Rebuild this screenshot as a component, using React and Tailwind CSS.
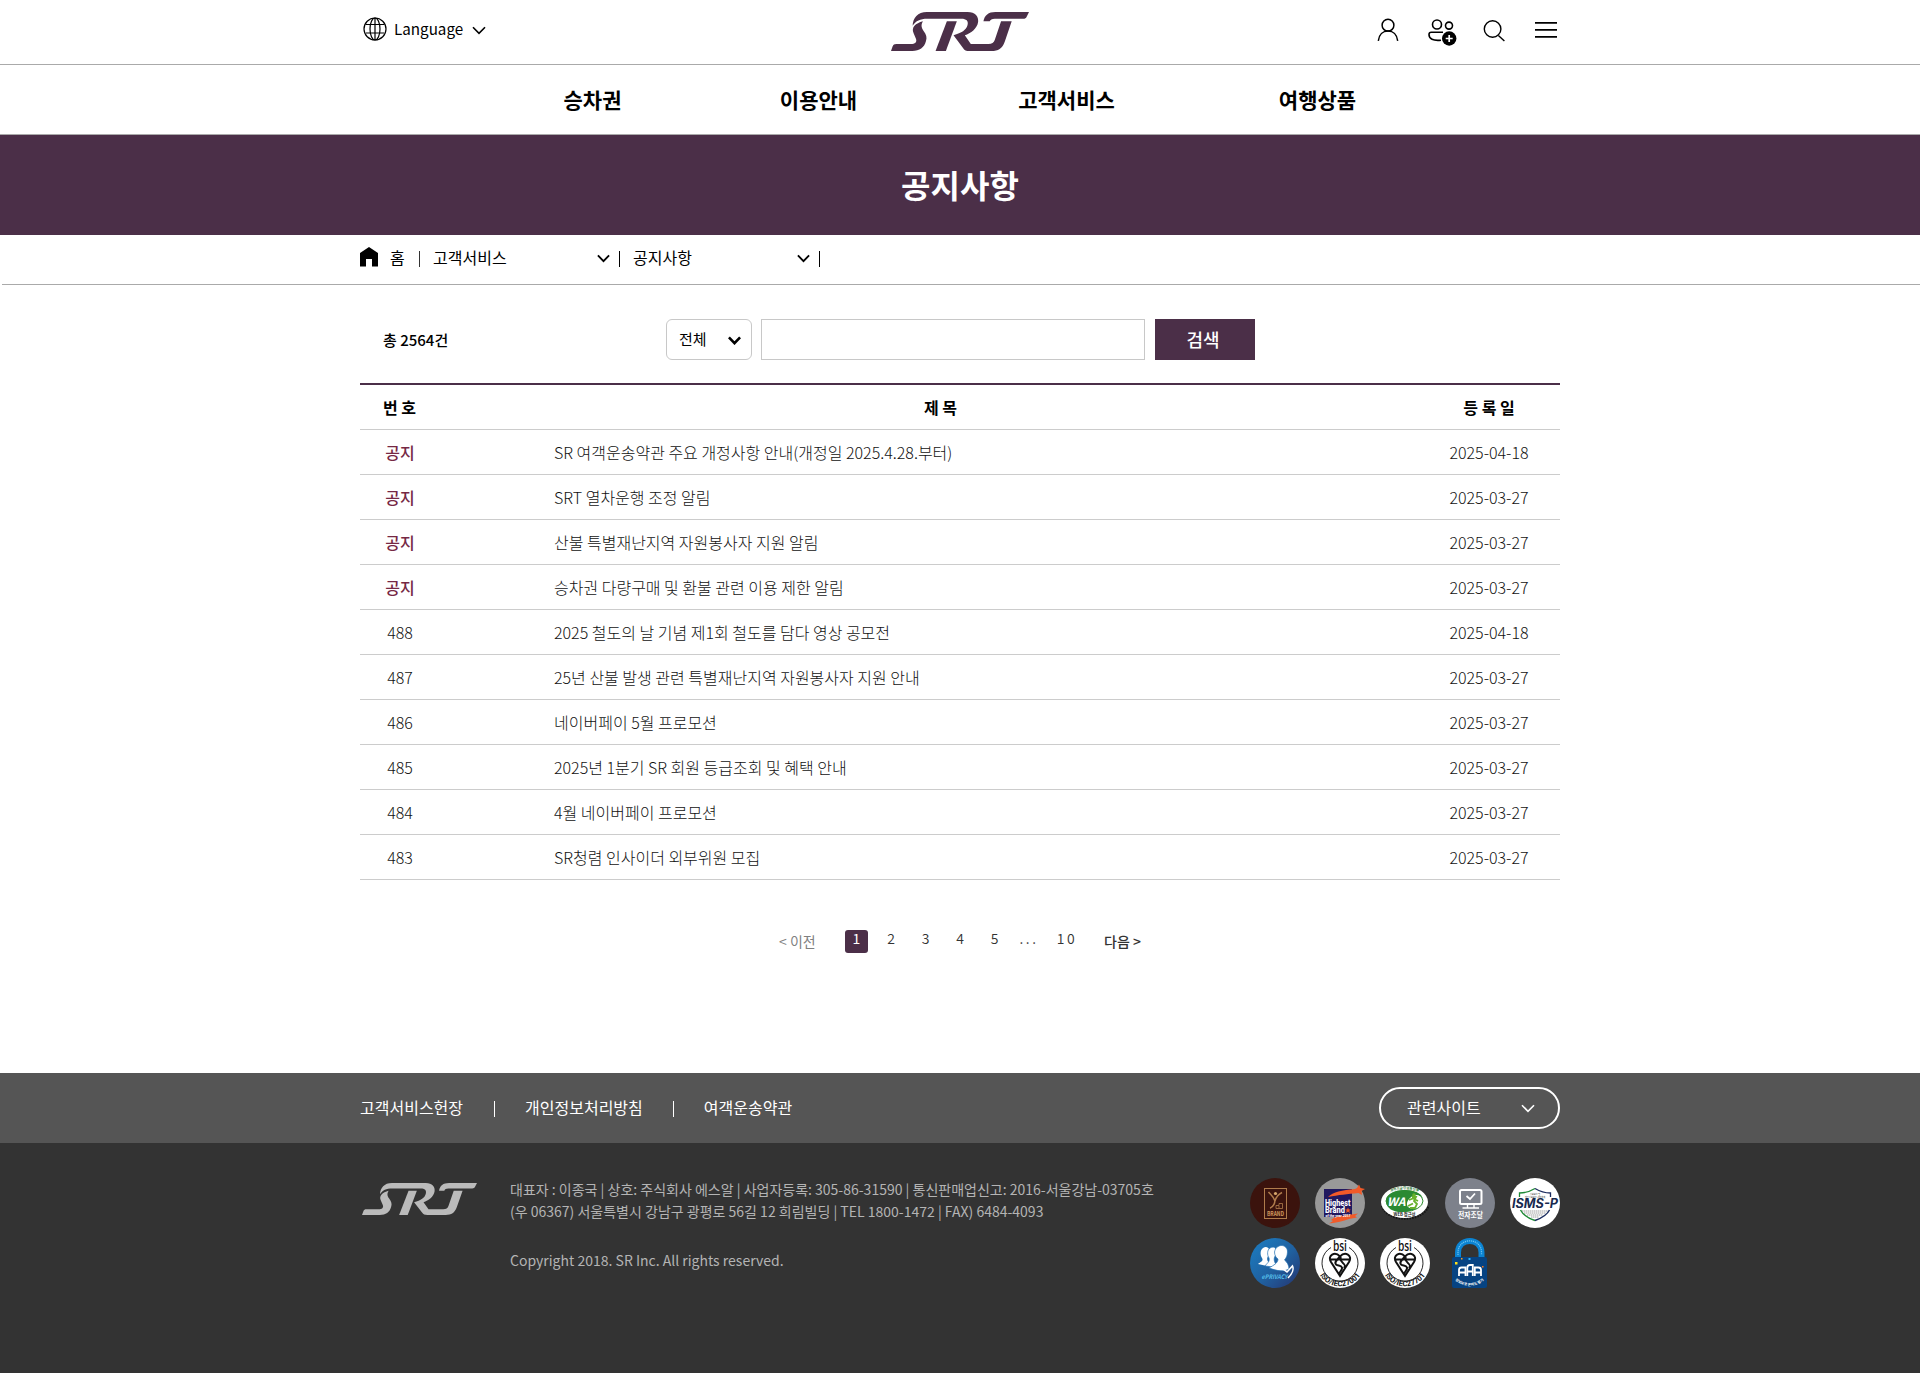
import React from "react";

const NOTICES = [
  ["공지", "SR 여객운송약관 주요 개정사항 안내(개정일 2025.4.28.부터)", "2025-04-18"],
  ["공지", "SRT 열차운행 조정 알림", "2025-03-27"],
  ["공지", "산불 특별재난지역 자원봉사자 지원 알림", "2025-03-27"],
  ["공지", "승차권 다량구매 및 환불 관련 이용 제한 알림", "2025-03-27"],
  ["488", "2025 철도의 날 기념 제1회 철도를 담다 영상 공모전", "2025-04-18"],
  ["487", "25년 산불 발생 관련 특별재난지역 자원봉사자 지원 안내", "2025-03-27"],
  ["486", "네이버페이 5월 프로모션", "2025-03-27"],
  ["485", "2025년 1분기 SR 회원 등급조회 및 혜택 안내", "2025-03-27"],
  ["484", "4월 네이버페이 프로모션", "2025-03-27"],
  ["483", "SR청렴 인사이더 외부위원 모집", "2025-03-27"],
];

function Logo({ className }) {
  return (
    <svg viewBox="32 36 415 117" preserveAspectRatio="none" fill="currentColor" className={className}>
      <path d="M97 77C98 54 112 36 140 36H262C286 36 296 50 294 66C291 86 272 100 254 106L272 132H325C336 132 341 128 344 120L363 64H395L374 125C366 146 355 153 334 153H268C258 153 253 151 248 143L220 106C245 99 258 90 262 76C266 62 258 56 244 56H142C118 56 108 62 97 77Z" />
      <path d="M200 64H230L197 153H166Z" />
      <path d="M128 64C121 76 124 84 130 93C138 104 141 112 137 124C132 143 118 153 96 153H32L37 139C39 134 42 132 48 132H92C104 132 111 126 107 116L100 100C92 82 106 70 128 64Z" />
      <path d="M310 64C313 46 325 36 346 36H447L440 50C438 54 435 56 430 56H344C335 56 331 59 329 64Z" />
    </svg>
  );
}

function Chevron({ className, width = 1.6 }) {
  return (
    <svg viewBox="0 0 14 9" fill="none" stroke="currentColor" strokeWidth={width} className={className}>
      <path d="M1 1.2 7 7.4 13 1.2" />
    </svg>
  );
}

function Globe() {
  return (
    <svg viewBox="0 0 24 24" fill="none" stroke="currentColor" strokeWidth="1.2" className="size-6">
      <circle cx="12" cy="12" r="11" />
      <ellipse cx="12" cy="12" rx="5" ry="11" />
      <path d="M12 1v22M2.6 7.5h18.8M2.6 16h18.8" />
    </svg>
  );
}

function Header() {
  return (
    <header>
      <div className="h-[65px] border-b border-[#aaa]">
        <div className="mx-auto grid h-full w-[1200px] grid-cols-[1fr_138px_1fr]">
          <div className="flex items-center pb-[7px] pl-[3px]">
            <Globe />
            <span className="mb-[2px] ml-[7px] text-[15.2px] leading-6">Language</span>
            <Chevron className="mt-1 ml-[9px] h-[9px] w-[14px]" />
          </div>
          <Logo className="mt-3 h-[39px] w-[138px] text-[#4b2f48]" />
          <div className="flex items-start justify-end pr-[3px]">
            <svg viewBox="0 0 22 24" fill="none" stroke="currentColor" strokeWidth="1.5" className="mt-[18px] mr-[29px] h-6 w-[22px]">
              <circle cx="11" cy="7.2" r="5.9" />
              <path d="M1.3 22.8C2 16.5 6 12.9 11 12.9s9 3.6 9.7 9.9" />
            </svg>
            <svg viewBox="0 0 29 28" fill="none" stroke="currentColor" strokeWidth="1.6" className="mt-[19px] mr-[26px] h-7 w-[29px]">
              <circle cx="9" cy="5.5" r="4.5" />
              <circle cx="21" cy="6.6" r="3.5" />
              <path d="M15 13.3H3.3C1.8 13.3 1 14.2 1 15.5C1 20 5 22 13 21.2" />
              <circle cx="21.2" cy="19.5" r="7.2" fill="currentColor" stroke="none" />
              <path d="M21.2 16v7M17.7 19.5h7" stroke="#fff" strokeWidth="1.7" />
            </svg>
            <svg viewBox="0 0 22 22" fill="none" stroke="currentColor" strokeWidth="1.4" className="mt-[20px] mr-[30px] size-[22px]">
              <circle cx="9.6" cy="9" r="8.3" />
              <path d="M15.4 15.5 21.4 21" />
            </svg>
            <svg viewBox="0 0 22 18" stroke="currentColor" strokeWidth="1.7" className="mt-[21px] h-[18px] w-[22px]">
              <path d="M0 1.8h22M0 8.8h22M0 15.8h22" />
            </svg>
          </div>
        </div>
      </div>
      <nav className="flex h-[70px] justify-center border-b border-[#aaa] pr-[10px] text-[21px] leading-[68px] font-bold">
        <span className="w-[200px] text-center">승차권</span>
        <span className="ml-[26px] w-[200px] text-center">이용안내</span>
        <span className="ml-[48px] w-[200px] text-center">고객서비스</span>
        <span className="ml-[51px] w-[200px] text-center">여행상품</span>
      </nav>
    </header>
  );
}

function Bar({ className }) {
  return <i className={"block w-px " + className} />;
}

function Breadcrumb() {
  return (
    <div className="ml-[2px] h-[50px] border-b border-[#aaa]">
      <div className="mx-auto flex h-full w-[1200px] -translate-x-px items-center pb-[5px] text-base">
        <svg viewBox="0 0 18 20" fill="currentColor" className="h-5 w-[18px]">
          <path d="M0 6 9 0l9 6v13.500h-6V12H6v7.500H0Z" />
        </svg>
        <span className="ml-3 w-[29px]">홈</span>
        <Bar className="mt-[3px] h-4 bg-[#333]" />
        <span className="ml-[13px] w-[164px]">고객서비스</span>
        <Chevron width={2} className="mt-[3px] h-[9px] w-[13px]" />
        <Bar className="mt-[3px] ml-[9px] h-4 bg-black" />
        <span className="ml-[13px] w-[164px]">공지사항</span>
        <Chevron width={2} className="mt-[3px] h-[9px] w-[13px]" />
        <Bar className="mt-[3px] ml-[9px] h-4 bg-black" />
      </div>
    </div>
  );
}

function SearchBar() {
  return (
    <div className="flex h-[41px]">
      <p className="w-[306px] pl-[23px] text-[15px] leading-[42px] font-medium">총 2564건</p>
      <div className="flex w-[86px] items-center justify-between rounded-[6px] border border-[#c8c8c8] pr-[10px] pl-3 text-[15px]">
        <span>전체</span>
        <Chevron width={2.8} className="mt-[2px] h-[9px] w-[13px]" />
      </div>
      <input className="ml-[9px] w-[384px] border border-[#c8c8c8] outline-none" />
      <button className="ml-[10px] w-[100px] bg-[#4b2f48] pr-1 pb-[2px] text-[18px] leading-[38px] font-medium text-white">검색</button>
    </div>
  );
}

function NoticeTable() {
  return (
    <div className="mt-[23px] border-t-2 border-[#4b2f48] text-base">
      <div className="grid h-[45px] grid-cols-[80px_1fr_142px] border-b border-[#ccc] text-center leading-[45px] font-bold">
        <span className="pr-px">번 호</span>
        <span className="pl-[23px]">제 목</span>
        <span>등 록 일</span>
      </div>
      {NOTICES.map(([no, title, date], i) => (
        <div key={i} className="grid h-[45px] grid-cols-[80px_1fr_142px] border-b border-[#ccc] leading-[45px] font-light text-[#111]">
          {no === "공지" ? (
            <span className="text-center font-medium text-[#762844]">{no}</span>
          ) : (
            <span className="text-center">{no}</span>
          )}
          <span className="pl-[114px]">{title}</span>
          <span className="text-center">{date}</span>
        </div>
      ))}
    </div>
  );
}

function Pagination() {
  return (
    <div className="mt-[50px] flex h-6 text-[14px] font-[350] text-[#333]">
      <span className="ml-[419px] w-[66px] leading-[22px] font-normal text-[#808080]">&lt; 이전</span>
      <span className="h-[23px] w-[23px] rounded-[3px] bg-[#4b2f48] text-center leading-[17px] font-normal text-white">1</span>
      <span className="ml-[6px] w-[34px] text-center leading-[17px]">2</span>
      <span className="w-[35px] text-center leading-[17px]">3</span>
      <span className="w-[34px] text-center leading-[17px]">4</span>
      <span className="w-[35px] text-center leading-[17px]">5</span>
      <span className="w-[34px] text-center leading-[17px] tracking-[2.5px]">...</span>
      <span className="ml-[3px] w-[36px] text-center leading-[17px] tracking-[2.5px]">10</span>
      <span className="ml-[19px] leading-[22px] font-medium">다음 &gt;</span>
    </div>
  );
}

function Bsi({ id, label }) {
  return (
    <svg viewBox="0 0 50 50" className="size-[50px] overflow-visible">
      <circle cx="25" cy="25" r="25" fill="#fff" />
      <path d="M16 9.500A18 18 0 1 0 34 9.500" fill="none" stroke="#111" strokeWidth=".9" />
      <text x="18" y="13" fontSize="13" fontWeight="500" fill="#111" textLength="14" lengthAdjust="spacingAndGlyphs">bsi</text>
      <path d="M16 24C12 17 20 13 25 18.500C30 13 38 17 34 24L25 38ZM14.700 21.500H35.300M25 18.500C22 22 19 24 21 26.500C23 28 26 27 27 29.500C27.500 32 25 33 24 36M26 19C23 25 33 25 29 30" fill="none" stroke="#111" strokeWidth="2" />
      <path id={id} d="M4 36A24 24 0 0 0 46 36" fill="none" />
      <text fontSize="7.6" fontWeight="700" fontFamily="Roboto, sans-serif" fill="#111" textAnchor="middle">
        <textPath href={"#" + id} startOffset="50%">{label}</textPath>
      </text>
    </svg>
  );
}

function Badges() {
  return (
    <div className="grid grid-cols-[repeat(5,50px)] gap-x-[15px] gap-y-[10px]">
      <svg viewBox="0 0 50 50" className="size-[50px]">
        <circle cx="25" cy="25" r="25" fill="#3b130d" />
        <g fill="none" stroke="#b07c4c">
          <rect x="14.5" y="10.5" width="22" height="30" />
          <path d="M18.500 14C21 17 24 19 25 23C26 19 28 16.500 32 14.500M25 21C25 26 23 29 20 30" strokeWidth="1.5" />
          <path d="M26 30.500V27.500H29V25.500H32.500V30.500ZM29 28V30" strokeWidth=".8" />
        </g>
        <circle cx="25.500" cy="15.500" r="1.6" fill="#d9a86c" />
        <text x="17" y="37.5" fontSize="5.5" fontWeight="700" fill="#d0985e" textLength="17" lengthAdjust="spacingAndGlyphs">BRAND</text>
      </svg>
      <svg viewBox="0 0 50 50" className="size-[50px] overflow-visible">
        <circle cx="25" cy="25" r="25" fill="#999" />
        <rect x="9" y="11" width="28" height="28" fill="#21185f" />
        <path d="M13 19C18 14 27 12 40 11L42 10L44 6.500L45.500 10L50 11L46.500 13L47 17L43.500 15C32 16 24 17 13 19Z" fill="#f15a29" />
        <path d="M16 42L20 39L43 35.500L40 38L42 39.500L34 41C28 43 22 44.500 14 45.500L18 43Z" fill="#f15a29" />
        <g fontWeight="800" fill="#fff" fontFamily="Roboto, sans-serif">
          <text x="10" y="27.5" fontSize="8.6" textLength="25.5" lengthAdjust="spacingAndGlyphs">Highest</text>
          <text x="10" y="35" fontSize="8.6" textLength="20" lengthAdjust="spacingAndGlyphs">Brand</text>
          <text x="10.5" y="38.6" fontSize="3.5" textLength="25" lengthAdjust="spacingAndGlyphs">of the year 2017</text>
        </g>
        <path d="M33 29.500l.8 2h2l-1.500 1.300.6 2.200-1.900-1.200-1.900 1.200.6-2.200-1.500-1.300h2Z" fill="#f15a29" />
      </svg>
      <svg viewBox="0 0 50 50" className="size-[50px]">
        <path d="M2 28C7 45 43 45 48.500 28" fill="none" stroke="#151515" strokeWidth="2" strokeDasharray="1.500 1.200" />
        <ellipse cx="24.5" cy="24" rx="23.5" ry="16" fill="#fff" />
        <ellipse cx="24.5" cy="23" rx="18.5" ry="10.5" fill="#fff" stroke="#2f8e2f" strokeWidth="1" />
        <path d="M6 23C6 9 40 9 42.500 20C38 14 29 18 27 25C26 31 34 32 39 29C28 37 6 36 6 23Z" fill="#2b8a33" />
        <text x="7" y="27.5" fontSize="11.5" fontWeight="700" fontStyle="italic" fill="#fff" textLength="18.5" lengthAdjust="spacingAndGlyphs">WA</text>
        <path d="M32 19L36 19L34 23L37 26L35 30M29 22L33 20.500L38 23M28 28L33 25.500M30 30H35" fill="none" stroke="#69b22d" strokeWidth="1.8" />
        <circle cx="34" cy="17" r="1.8" fill="#69b22d" />
        <path id="wa-top" d="M6 17C14 9.500 35 9.500 43 17" fill="none" />
        <text fontSize="3.4" fontWeight="700" fill="#2b7a33" textAnchor="middle">
          <textPath href="#wa-top" startOffset="50%">과학기술정보통신부</textPath>
        </text>
        <text x="24.5" y="38" fontSize="4.2" fontWeight="700" fill="#222" textAnchor="middle">WEB 접근성</text>
      </svg>
      <svg viewBox="0 0 50 50" className="size-[50px]">
        <circle cx="25" cy="25" r="25" fill="#7d818b" />
        <rect x="15" y="12" width="21.5" height="14" rx="1.5" fill="none" stroke="#fff" strokeWidth="2" />
        <path d="M21.500 18L25 21L30 15.500" fill="none" stroke="#fff" strokeWidth="1.8" />
        <path d="M22.500 27V30M29 27V30M17.500 30H34" fill="none" stroke="#fff" strokeWidth="1.4" />
        <text x="13" y="40.3" fontSize="7.5" fontWeight="700" fill="#fff" textLength="25" lengthAdjust="spacingAndGlyphs">전자조달</text>
      </svg>
      <svg viewBox="0 0 50 50" className="size-[50px]">
        <circle cx="25" cy="25" r="25" fill="#fff" />
        <path d="M9.500 19V15C15 15 20 13.500 25 10.500" fill="none" stroke="#1f8a36" strokeWidth="1.3" />
        <path d="M25 10.500C30 13.500 35 15 40.500 15V19" fill="none" stroke="#1a2b5e" strokeWidth="1.3" />
        <path d="M10.500 32C13 37 18 40 25 42.500" fill="none" stroke="#1f8a36" strokeWidth="1.5" />
        <path d="M25 42.500C32 40 37 37 39.500 32" fill="none" stroke="#1a2b5e" strokeWidth="1.5" />
        <text x="25" y="16.5" fontSize="2.2" fill="#333" textAnchor="middle">정보보호 및</text>
        <text x="25" y="19.5" fontSize="2.2" fill="#333" textAnchor="middle">개인정보보호 관리체계</text>
        <text x="2" y="30" fontSize="12.5" fontFamily="Inter, sans-serif" fontWeight="700" fontStyle="italic" fill="#17294f" textLength="46" lengthAdjust="spacingAndGlyphs">ISMS-P</text>
        <path d="M12 33H38M14 35H36M17 37H33M21 39H29" stroke="#888" strokeWidth=".8" strokeDasharray="1.500 .5" />
      </svg>
      <svg viewBox="0 0 50 50" className="size-[50px]">
        <defs>
          <linearGradient id="privacy-bg" x1="0" y1="0" x2="1" y2="1">
            <stop offset="0" stopColor="#1b7fc4" />
            <stop offset=".55" stopColor="#20609f" />
            <stop offset="1" stopColor="#25336f" />
          </linearGradient>
        </defs>
        <circle cx="25" cy="25" r="25" fill="url(#privacy-bg)" />
        <path d="M13 10C18 7 21 12 19 17C16 20 17 23 20 26L17 28L8 26C10 24 14 23 12 20C10 17 10 12 13 10Z" fill="#fff" />
        <path d="M20 10C25 7 28 12 26 17C23 20 24 24 27 28L23 29L15 28C17 25 20 24 19 20C17 17 17 12 20 10Z" fill="#fff" stroke="#2170b3" strokeWidth=".7" />
        <path d="M24.500 14C26 5.500 36.500 5.500 37.500 13C37.500 18 36 20 34.500 22C37 24 39 27 39 31C34 34 27 33 19 30C24 27 28 25 28 21C26 20 24.500 17 24.500 14Z" fill="#fff" stroke="#2170b3" strokeWidth=".7" />
        <path d="M33 31L37 34L42.500 28C44 31 42 36 38 40" fill="none" stroke="#fff" strokeWidth="1.6" />
        <text x="11.5" y="41" fontSize="6.2" fontWeight="700" fontStyle="italic" fill="#54bde8" textLength="26" lengthAdjust="spacingAndGlyphs">ePRIVACY</text>
      </svg>
      <Bsi id="bsi-27001" label="ISO/IEC27001" />
      <Bsi id="bsi-27701" label="ISO/IEC27701" />
      <svg viewBox="0 0 50 50" className="size-[50px] overflow-visible">
        <path d="M13 22V14.500C13 -1 36.500 -1 36.500 14.500V22" fill="none" stroke="#0b84d3" strokeWidth="6" />
        <path d="M13 17V14.500C13 -1 36.500 -1 36.500 14.500V17" fill="none" stroke="#6cc0ee" strokeWidth="1.3" strokeDasharray="1.200 .8" />
        <rect x="7" y="19" width="35" height="31" rx="2" fill="#064382" />
        <g fill="none" stroke="#fff" strokeWidth="1.8">
          <path d="M14 38V32Q14 29.500 16.500 29.500H20.500V38M14 34.500H20.500" />
          <path d="M22.300 38V30Q22.300 27 25 27H27.800V38M22.300 33.500H27.800" />
          <path d="M29.800 38V29.500H33.500Q36 29.500 36 32V38M29.800 34.500H36" />
        </g>
        <path d="M10 24h2.500v2.500H10z" fill="#ffe01b" />
        <path d="M16 20h1.500v1.500H16z" fill="#ff9f1b" />
        <path d="M23.500 20h2v2h-2z" fill="#2fb5ff" />
        <path d="M37 28h1.500v1.500H37z" fill="#ff7a1b" />
        <path id="lock-arc" d="M10 42.500Q24.500 53 39 42.500" fill="none" />
        <text fontSize="3.6" fontWeight="700" fill="#fff" textAnchor="middle">
          <textPath href="#lock-arc" startOffset="50%">정보보호 준비도 평가</textPath>
        </text>
      </svg>
    </div>
  );
}

function Footer() {
  return (
    <footer className="text-white">
      <div className="h-[70px] bg-[#555]">
        <div className="mx-auto flex h-full w-[1200px] items-center text-base">
          <span className="pb-[2px]">고객서비스헌장</span>
          <Bar className="mt-[2px] mr-[30px] ml-[31px] h-4 bg-white" />
          <span className="pb-[2px]">개인정보처리방침</span>
          <Bar className="mt-[2px] mr-[30px] ml-[30px] h-4 bg-white" />
          <span className="pb-[2px]">여객운송약관</span>
          <div className="ml-auto flex h-[42px] w-[181px] items-center justify-between rounded-full border-2 border-white pr-[23px] pl-[26px]">
            <span className="pb-[2px]">관련사이트</span>
            <Chevron className="h-[9px] w-[14px]" />
          </div>
        </div>
      </div>
      <div className="h-[230px] bg-[#333]">
        <div className="mx-auto flex w-[1200px] pt-[35px]">
          <Logo className="mt-[5px] ml-[2px] h-8 w-[115px] text-[#bbb]" />
          <div className="ml-[33px] text-[14px] leading-[22px] text-[#b4b4b4]">
            <p>대표자 : 이종국 | 상호: 주식회사 에스알 | 사업자등록: 305-86-31590 | 통신판매업신고: 2016-서울강남-03705호</p>
            <p>(우 06367) 서울특별시 강남구 광평로 56길 12 희림빌딩 | TEL 1800-1472 | FAX) 6484-4093</p>
            <p className="mt-[27px]">Copyright 2018. SR Inc. All rights reserved.</p>
          </div>
          <div className="ml-auto">
            <Badges />
          </div>
        </div>
      </div>
    </footer>
  );
}

export default function App() {
  return (
    <div className="min-h-[1373px] bg-white font-['Noto_Sans_CJK_KR',sans-serif] text-black">
      <Header />
      <h1 className="h-[100px] bg-[#4b2f48] text-center text-[32px] leading-[98px] font-bold text-white">공지사항</h1>
      <Breadcrumb />
      <main className="mx-auto h-[788px] w-[1200px] pt-[34px]">
        <SearchBar />
        <NoticeTable />
        <Pagination />
      </main>
      <Footer />
    </div>
  );
}
